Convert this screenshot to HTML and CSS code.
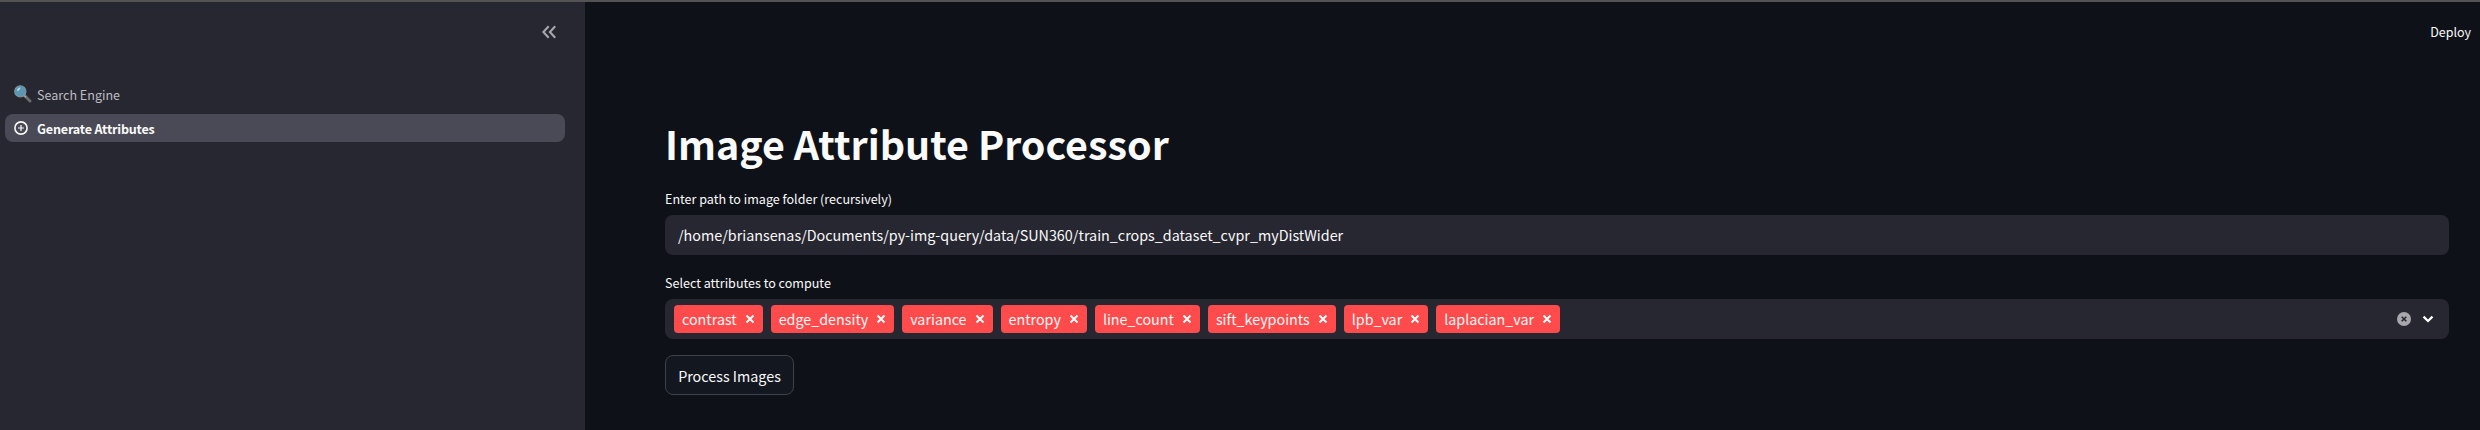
FILE: index.html
```html
<!DOCTYPE html>
<html lang="en">
<head>
<meta charset="utf-8">
<title>Image Attribute Processor</title>
<link rel="stylesheet" href="styles.css">
</head>
<body>
<div class="app">
  <aside class="sidebar">
    <div class="sidebar-header">
      <svg class="collapse" viewBox="0 0 14 12"><path d="M6.7 .2 1.4 6l5.3 5.8M13.2 .2 7.9 6l5.3 5.8"/></svg>
    </div>
    <nav class="nav">
      <a class="nav-item">
        <svg class="nav-icon" viewBox="0 0 18 18"><path d="M10.5 10.5 16 16" stroke="#6b6b70" stroke-width="3" stroke-linecap="round"/><path d="M10 10.3 12 12.3" stroke="#a5a5a8" stroke-width="1.6"/><circle cx="6.3" cy="6.4" r="5.6" fill="#5b97b5" stroke="#81949f" stroke-width="1.1"/><path d="M3 6.2C3 4 4.4 2.6 6.4 2.5 6.2 4.3 5 5.7 3 6.2Z" fill="#b8dbe7"/></svg>
        <span>Search Engine</span>
      </a>
      <a class="nav-item active">
        <svg class="nav-icon" viewBox="0 0 18 18"><g fill="none" stroke="#fafafa"><circle cx="7" cy="9" r="6.1" stroke-width="1.6"/><path d="M7 6.1v5.8M4.1 9h5.8" stroke-width="1.2"/></g></svg>
        <span>Generate Attributes</span>
      </a>
    </nav>
  </aside>
  <main class="main">
    <header class="toolbar"><span>Deploy</span></header>
    <div class="content">
      <h1 class="title">Image Attribute Processor</h1>
      <label class="label">Enter path to image folder (recursively)</label>
      <div class="field path">/home/briansenas/Documents/py-img-query/data/SUN360/train_crops_dataset_cvpr_myDistWider</div>
      <label class="label second">Select attributes to compute</label>
      <div class="field select">
        <div class="tags">
          <span class="tag">contrast<svg viewBox="0 0 8 8"><path d="M.5.5l7 7M7.5.5l-7 7"/></svg></span>
          <span class="tag">edge_density<svg viewBox="0 0 8 8"><path d="M.5.5l7 7M7.5.5l-7 7"/></svg></span>
          <span class="tag">variance<svg viewBox="0 0 8 8"><path d="M.5.5l7 7M7.5.5l-7 7"/></svg></span>
          <span class="tag">entropy<svg viewBox="0 0 8 8"><path d="M.5.5l7 7M7.5.5l-7 7"/></svg></span>
          <span class="tag">line_count<svg viewBox="0 0 8 8"><path d="M.5.5l7 7M7.5.5l-7 7"/></svg></span>
          <span class="tag">sift_keypoints<svg viewBox="0 0 8 8"><path d="M.5.5l7 7M7.5.5l-7 7"/></svg></span>
          <span class="tag">lpb_var<svg viewBox="0 0 8 8"><path d="M.5.5l7 7M7.5.5l-7 7"/></svg></span>
          <span class="tag">laplacian_var<svg viewBox="0 0 8 8"><path d="M.5.5l7 7M7.5.5l-7 7"/></svg></span>
        </div>
        <div class="controls">
          <svg class="clear" viewBox="0 0 14 14"><circle cx="7" cy="7" r="7"/><path d="M4.7 4.7l4.6 4.6M9.3 4.7 4.7 9.3"/></svg>
          <svg class="chevron" viewBox="0 0 10 6"><path d="M.5 .6 5 5l4.5-4.4"/></svg>
        </div>
      </div>
      <button class="button">Process Images</button>
    </div>
  </main>
</div>
</body>
</html>
```
FILE: styles.css
```css
* { box-sizing: border-box; }
body {
  margin: 0;
  background: #0e1118;
  color: #fafafa;
  font-family: "Noto Sans CJK SC", "Noto Sans", sans-serif;
  font-size: 14.33px;
}
svg { display: block; flex: none; overflow: visible; }
.app { display: flex; height: 430px; border-top: 2px solid #535353; overflow: hidden; }
.sidebar { width: 585px; flex: none; background: #272731; }
.sidebar-header { height: 78px; display: flex; justify-content: flex-end; padding: 24px 29px 0 0; }
.collapse { width: 14px; height: 12px; fill: none; stroke: #a6a6aa; stroke-width: 2.1; }
.nav { display: flex; flex-direction: column; gap: 6px; padding: 0 20px 0 5px; }
.nav-item {
  display: flex; align-items: center; gap: 5px;
  height: 28px; padding-left: 9px; border-radius: 8px;
  font-size: 12.55px; line-height: 28px; color: #bdbdc1;
}
.nav-item span { padding-top: 1px; }
.nav-item.active { background: #494a55; color: #fafafa; font-weight: 700; letter-spacing: -.18px; }
.nav-icon { width: 18px; height: 18px; }
.main { flex: 1; min-width: 0; }
.toolbar { height: 60px; padding: 0 9px 0 0; display: flex; justify-content: flex-end; font-size: 12.5px; line-height: 60px; }
.content { padding: 54px 31px 0 80px; display: flex; flex-direction: column; }
.title { margin: 0; height: 73px; line-height: 53px; font-size: 39.4px; font-weight: 700; }
.label { height: 26px; line-height: 20px; font-size: 12.55px; }
.second { margin-top: 18px; }
.field { height: 40px; border-radius: 8px; background: #272731; }
.path { padding-left: 13px; line-height: 39px; }
.select { display: flex; justify-content: space-between; align-items: center; padding: 0 16px 0 9px; }
.tags { display: flex; gap: 8px; }
.tag {
  display: flex; align-items: center; gap: 9px;
  height: 28px; padding: 0 9px 0 8px; border-radius: 4px;
  background: #ff4b4b; font-size: 14.3px; line-height: 26px; white-space: nowrap;
}
.tag svg { width: 8px; height: 8px; fill: none; stroke: #fff; stroke-width: 1.9; }
.controls { display: flex; align-items: center; gap: 12px; }
.clear { width: 14px; height: 14px; fill: #a7a7ac; }
.clear path { stroke: #272731; stroke-width: 1.6; }
.chevron { width: 10px; height: 6px; fill: none; stroke: #fff; stroke-width: 2.2; }
.button {
  align-self: flex-start; width: 129px; height: 40px; margin-top: 16px; padding: 0;
  border: 1px solid #3f4149; border-radius: 8px; background: #131720;
  color: inherit; font: inherit; line-height: 37px;
}
```
